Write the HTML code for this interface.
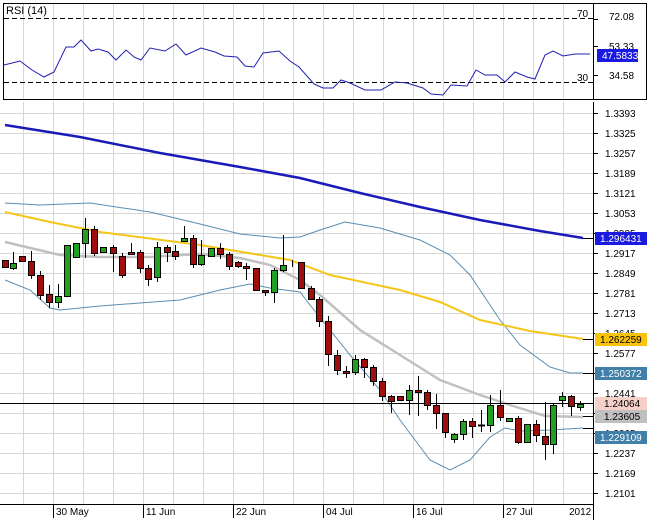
<!DOCTYPE html>
<html><head><meta charset="utf-8"><style>
body{margin:0;background:#fff;width:653px;height:520px;overflow:hidden}
svg{display:block;font-family:"Liberation Sans",sans-serif;font-size:11px}
</style></head><body>
<svg width="653" height="520" viewBox="0 0 653 520">
<g stroke="#d6d6d6" stroke-width="1">
<path d="M23.5 4V99M53.5 4V99M83.5 4V99M113.5 4V99M143.5 4V99M173.5 4V99M203.5 4V99M233.5 4V99M263.5 4V99M293.5 4V99M323.5 4V99M353.5 4V99M383.5 4V99M413.5 4V99M443.5 4V99M473.5 4V99M503.5 4V99M533.5 4V99M563.5 4V99"/>
<path d="M23.5 102V504M53.5 102V504M83.5 102V504M113.5 102V504M143.5 102V504M173.5 102V504M203.5 102V504M233.5 102V504M263.5 102V504M293.5 102V504M323.5 102V504M353.5 102V504M383.5 102V504M413.5 102V504M443.5 102V504M473.5 102V504M503.5 102V504M533.5 102V504M563.5 102V504"/>
<path d="M0 113.5H593M0 133.5H593M0 153.5H593M0 173.5H593M0 193.5H593M0 213.5H593M0 233.5H593M0 253.5H593M0 273.5H593M0 293.5H593M0 313.5H593M0 333.5H593M0 353.5H593M0 373.5H593M0 393.5H593M0 413.5H593M0 433.5H593M0 453.5H593M0 473.5H593M0 493.5H593"/>
</g>
<!-- RSI panel -->
<rect x="3.5" y="3.5" width="643" height="96" fill="none" stroke="#000"/>
<line x1="593.5" y1="3" x2="593.5" y2="100" stroke="#000"/>
<path d="M4 18.5H593M4 82.5H593" stroke="#000" stroke-dasharray="5,3"/>
<text x="6" y="14" font-size="11">RSI (14)</text>
<text x="577" y="17" font-size="10">70</text>
<text x="577" y="81" font-size="10">30</text>
<g font-size="10"><path d="M593 19.5h5M593 46.5h5M593 75.5h5" stroke="#000"/>
<text x="609" y="20">72.08</text><text x="609" y="50">53.33</text><text x="609" y="79">34.58</text></g>
<rect x="597" y="49" width="41" height="13" fill="#1a1ae0"/>
<text x="602" y="59" fill="#fff" font-size="10">47.5833</text>
<polyline fill="none" stroke="#2020b0" stroke-width="1" points="4,65 20,61 32,70 44,77 54,72 66,47 74,47 81,40 91,51 98,49 108,52 116,60 126,50 134,57 141,60 150,48 165,51 176,44 186,55 201,48 215,52 224,56 237,57 245,66 254,67 263,53 279,51 290,61 299,67 314,84 323,88 333,88 341,80 350,83 365,90 381,90 395,82 407,83 423,88 431,94 443,95 451,85 467,86 476,70 485,75 497,75 505,82 515,72 527,77 535,79 545,55 553,51 563,56 575,54 590,54"/>
<!-- main axis -->
<line x1="593.5" y1="102" x2="593.5" y2="520" stroke="#000"/>
<line x1="0" y1="504.5" x2="593" y2="504.5" stroke="#000"/>
<g stroke="#000"><path d="M53.5 504V518M143.5 504V518M233.5 504V518M323.5 504V518M413.5 504V518M503.5 504V518"/>
<path d="M593 113.5h5M593 133.5h5M593 153.5h5M593 173.5h5M593 193.5h5M593 213.5h5M593 233.5h5M593 253.5h5M593 273.5h5M593 293.5h5M593 313.5h5M593 333.5h5M593 353.5h5M593 373.5h5M593 393.5h5M593 413.5h5M593 433.5h5M593 453.5h5M593 473.5h5M593 493.5h5"/></g>
<g font-size="10">
<text x="56" y="515">30 May</text><text x="146" y="515">11 Jun</text><text x="236" y="515">22 Jun</text><text x="326" y="515">04 Jul</text><text x="416" y="515">16 Jul</text><text x="506" y="515">27 Jul</text><text x="569" y="515">2012</text>
<text x="605" y="117">1.3393</text><text x="605" y="137">1.3325</text><text x="605" y="157">1.3257</text><text x="605" y="177">1.3189</text><text x="605" y="197">1.3121</text><text x="605" y="217">1.3053</text><text x="605" y="237">1.2985</text><text x="605" y="257">1.2917</text><text x="605" y="277">1.2849</text><text x="605" y="297">1.2781</text><text x="605" y="317">1.2713</text><text x="605" y="337">1.2645</text><text x="605" y="357">1.2577</text><text x="605" y="377">1.2509</text><text x="605" y="397">1.2441</text><text x="605" y="417">1.2373</text><text x="605" y="437">1.2305</text><text x="605" y="457">1.2237</text><text x="605" y="477">1.2169</text><text x="605" y="497">1.2101</text>
</g>
<!-- lines -->
<polyline fill="none" stroke="#5a8db0" stroke-width="1" points="5,203 40,205 90,203 150,212 200,224 240,234 280,238 300,237 320,230 345,222 380,228 420,240 450,255 470,275 480,290 500,320 520,345 550,367 570,373 583,373"/>
<polyline fill="none" stroke="#5a8db0" stroke-width="1" points="5,280 30,290 50,308 60,310 100,306 140,303 180,300 220,290 250,284 270,288 300,292 310,305 330,330 350,355 380,390 400,420 430,460 450,470 470,460 490,437 505,428 520,431 550,430 583,428"/>
<polyline fill="none" stroke="#c0c0c0" stroke-width="2.5" points="5,242 60,255 100,257 150,257 200,254 240,258 270,265 300,280 320,295 360,330 400,355 440,380 480,395 510,405 545,416 583,417"/>
<polyline fill="none" stroke="#f5c518" stroke-width="2" points="5,212 50,222 100,232 200,245 290,260 330,275 400,290 440,302 480,320 530,331 583,339"/>
<polyline fill="none" stroke="#1a1ab8" stroke-width="2.5" points="5,125 80,137 160,153 240,167 300,178 360,193 420,207 480,220 540,231 583,238"/>
<line x1="0" y1="403.5" x2="593" y2="403.5" stroke="#000"/>
<!-- candles -->
<g stroke="#000" stroke-width="1">
<path d="M13.5 252V270M31.5 251V279M40.5 271V300M49.5 285V308M58.5 284V308M85.5 218V258M94.5 226V256M113.5 245V272M122.5 253V278M131.5 243V254M140.5 250V273M148.5 265V286M157.5 242V282M167.5 245V262M175.5 245V260M184.5 226V241M193.5 235V268M201.5 240V266M220.5 243V259M229.5 252V270M238.5 261V268M246.5 263V280M256.5 268V291M265.5 290V296M274.5 268V303M283.5 235V272M292.5 260V267M311.5 286V300M319.5 297V327M328.5 316V366M337.5 350V375M346.5 366V378M355.5 355V375M364.5 358V378M373.5 365V386M382.5 378V401M391.5 395V413M409.5 385V415M418.5 376V416M427.5 390V410M436.5 394V429M445.5 413V438M454.5 433V443M463.5 419V440M472.5 418V438M481.5 410V432M490.5 395V432M500.5 390V421M518.5 416V444M536.5 420V442M545.5 402V460M553.5 403V454M562.5 392V407M571.5 395V416M580.5 401V411"/>
<g fill="#a00d0d">
<rect x="2.5" y="260.5" width="6" height="7"/><rect x="19.5" y="256.5" width="6" height="5"/><rect x="28.5" y="261.5" width="6" height="14"/><rect x="37.5" y="275.5" width="6" height="20"/><rect x="46.5" y="294.5" width="6" height="8"/><rect x="91.5" y="229.5" width="6" height="24"/><rect x="110.5" y="247.5" width="6" height="6"/><rect x="119.5" y="256.5" width="6" height="19"/><rect x="128.5" y="252.5" width="6" height="2"/><rect x="137.5" y="252.5" width="6" height="16"/><rect x="145.5" y="268.5" width="6" height="11"/><rect x="164.5" y="247.5" width="6" height="5"/><rect x="172.5" y="251.5" width="6" height="5"/><rect x="190.5" y="238.5" width="6" height="26"/><rect x="217.5" y="248.5" width="6" height="6"/><rect x="226.5" y="254.5" width="6" height="12"/><rect x="235.5" y="262.5" width="6" height="4"/><rect x="243.5" y="266.5" width="6" height="2"/><rect x="253.5" y="268.5" width="6" height="22"/><rect x="262.5" y="290.5" width="6" height="2"/><rect x="298.5" y="262.5" width="6" height="26"/><rect x="308.5" y="288.5" width="6" height="11"/><rect x="316.5" y="299.5" width="6" height="22"/><rect x="325.5" y="321.5" width="6" height="33"/><rect x="334.5" y="355.5" width="6" height="15"/><rect x="343.5" y="371.5" width="6" height="2"/><rect x="361.5" y="359.5" width="6" height="8"/><rect x="370.5" y="367.5" width="6" height="14"/><rect x="379.5" y="381.5" width="6" height="15"/><rect x="388.5" y="396.5" width="6" height="5"/><rect x="397.5" y="396.5" width="6" height="4"/><rect x="415.5" y="390.5" width="6" height="2"/><rect x="424.5" y="392.5" width="6" height="13"/><rect x="433.5" y="405.5" width="6" height="8"/><rect x="442.5" y="413.5" width="6" height="19"/><rect x="469.5" y="421.5" width="6" height="5"/><rect x="478.5" y="425" width="6" height="1"/><rect x="497.5" y="405.5" width="6" height="12"/><rect x="515.5" y="418.5" width="6" height="24"/><rect x="533.5" y="424.5" width="6" height="11"/><rect x="542.5" y="436.5" width="6" height="8"/><rect x="568.5" y="396.5" width="6" height="10"/>
</g>
<g fill="#22a022">
<rect x="10.5" y="263.5" width="6" height="5"/><rect x="55.5" y="296.5" width="6" height="6"/><rect x="64.5" y="245.5" width="6" height="51"/><rect x="73.5" y="243.5" width="6" height="14"/><rect x="82.5" y="229.5" width="6" height="14"/><rect x="100.5" y="247.5" width="6" height="5"/><rect x="154.5" y="247.5" width="6" height="30"/><rect x="181.5" y="238.5" width="6" height="3"/><rect x="198.5" y="255.5" width="6" height="9"/><rect x="208.5" y="248.5" width="6" height="8"/><rect x="271.5" y="270.5" width="6" height="22"/><rect x="280.5" y="265.5" width="6" height="5"/><rect x="352.5" y="359.5" width="6" height="13"/><rect x="406.5" y="390.5" width="6" height="10"/><rect x="451.5" y="434.5" width="6" height="5"/><rect x="460.5" y="421.5" width="6" height="13"/><rect x="487.5" y="405.5" width="6" height="20"/><rect x="506.5" y="418.5" width="6" height="3"/><rect x="524.5" y="424.5" width="6" height="18"/><rect x="550.5" y="405.5" width="6" height="39"/><rect x="559.5" y="396.5" width="6" height="4"/><rect x="577.5" y="404.5" width="6" height="3"/>
</g></g>
<!-- right value boxes -->
<g stroke="#000"><path d="M583 238.5h10M583 339.5h10M583 373.5h10M583 416.5h10M583 428.5h10"/></g>
<rect x="595" y="232" width="52" height="13" fill="#1a1ae0"/><text x="600" y="242" fill="#fff" font-size="10">1.296431</text>
<rect x="595" y="333" width="52" height="13" fill="#f8c30a"/><text x="600" y="343" font-size="10">1.262259</text>
<rect x="595" y="367" width="52" height="13" fill="#3f7fa8"/><text x="600" y="377" fill="#fff" font-size="10">1.250372</text>
<rect x="595" y="397" width="52" height="13" fill="#f5d0c8"/><text x="604" y="407" font-size="10">1.24064</text>
<rect x="595" y="410" width="52" height="13" fill="#c0c0c0"/><text x="604" y="420" font-size="10">1.23605</text>
<rect x="595" y="431" width="52" height="13" fill="#3f7fa8"/><text x="600" y="441" fill="#fff" font-size="10">1.229109</text>
</svg>
</body></html>
